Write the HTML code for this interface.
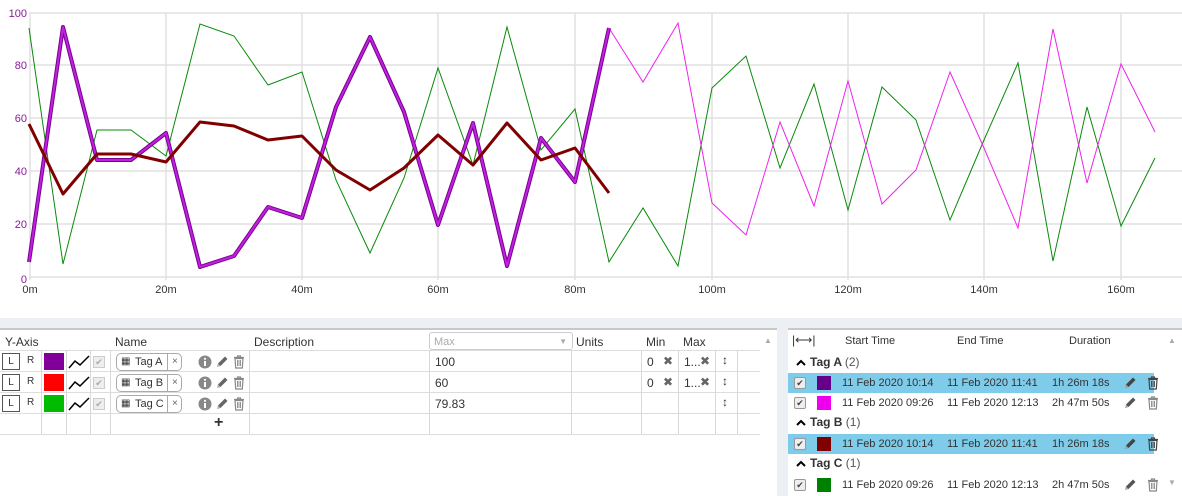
<!DOCTYPE html>
<html><head><meta charset="utf-8"><style>
body{margin:0;width:1182px;height:494px;overflow:hidden;background:#eceff3;font-family:"Liberation Sans",sans-serif;font-size:12px;color:#333;position:relative}
.chart{position:absolute;left:0;top:0;width:1182px;height:318px;background:#fff}
.lp{position:absolute;left:0;top:328px;width:777px;height:166px;background:#fff;border-top:2px solid #c8c8c8}
.rp{position:absolute;left:788px;top:328px;width:394px;height:166px;background:#fff;border-top:2px solid #c8c8c8;font-size:11px}
.a{position:absolute}
.vl{position:absolute;width:1px;background:#d8d8d8}
.hl{position:absolute;height:1px;background:#ddd}
.sw{position:absolute;width:20px;height:17px}
.tag{position:absolute;left:116px;width:64px;height:16px;border:1px solid #aaa;border-radius:5px;font-size:11px;line-height:16px}
.row{position:absolute;left:0;width:366px;height:20px}
.sel{background:#7ecbea}
.cb{position:absolute;left:6px;top:4px;width:10px;height:10px;border:1px solid #999;background:#eee;border-radius:2px;font-size:9px;line-height:10px;text-align:center;color:#444}
.ico{position:absolute}
</style></head><body>
<svg width="0" height="0" style="position:absolute">
<defs>
<symbol id="tr" viewBox="0 0 12 14"><path d="M1 2.5h10M4.5 2.5V1h3v1.5M2 3.5l.7 9.5h6.6l.7-9.5z" fill="none" stroke="currentColor" stroke-width="1.2"/><path d="M4.5 5v6M6 5v6M7.5 5v6" stroke="currentColor" stroke-width="0.9"/></symbol>
<symbol id="pn" viewBox="0 0 14 14"><path d="M2 12l1-3.5 7-7 2.5 2.5-7 7z" fill="currentColor"/><path d="M2 12l1-3.5 2.5 2.5z" fill="#fff" opacity=".5"/></symbol>
<symbol id="in" viewBox="0 0 14 14"><circle cx="7" cy="7" r="6.5" fill="currentColor"/><rect x="6" y="6" width="2" height="5" fill="#fff"/><circle cx="7" cy="3.8" r="1.1" fill="#fff"/></symbol>
</defs></svg>
<div class="chart">
<svg width="1182" height="318" style="position:absolute;left:0;top:0">
<g stroke="#e0e0e0" stroke-width="1.5">
<line x1="29" y1="13" x2="1182" y2="13"/><line x1="29" y1="65" x2="1182" y2="65"/><line x1="29" y1="118" x2="1182" y2="118"/><line x1="29" y1="171" x2="1182" y2="171"/><line x1="29" y1="224" x2="1182" y2="224"/><line x1="29" y1="277" x2="1182" y2="277"/>
<line x1="30" y1="13" x2="30" y2="280"/><line x1="166" y1="13" x2="166" y2="280"/><line x1="302" y1="13" x2="302" y2="280"/><line x1="438" y1="13" x2="438" y2="280"/><line x1="575" y1="13" x2="575" y2="280"/><line x1="712" y1="13" x2="712" y2="280"/><line x1="848" y1="13" x2="848" y2="280"/><line x1="984" y1="13" x2="984" y2="280"/><line x1="1121" y1="13" x2="1121" y2="280"/>
</g>
<g font-family="Liberation Sans,sans-serif" font-size="11" fill="#8a1a9a" text-anchor="end">
<text x="27" y="17">100</text><text x="27" y="69">80</text><text x="27" y="122">60</text><text x="27" y="175">40</text><text x="27" y="228">20</text><text x="27" y="283">0</text>
</g>
<g font-family="Liberation Sans,sans-serif" font-size="11" fill="#333" text-anchor="middle">
<text x="30" y="293">0m</text><text x="166" y="293">20m</text><text x="302" y="293">40m</text><text x="438" y="293">60m</text><text x="575" y="293">80m</text><text x="712" y="293">100m</text><text x="848" y="293">120m</text><text x="984" y="293">140m</text><text x="1121" y="293">160m</text>
</g>
<polyline fill="none" stroke="#0a8a0a" stroke-width="1" points="29,28 63,264 97,130 131,130 166,156 200,24 234,36 268,85 302,72 336,180 370,253 404,178 438,68 473,165 507,27 541,150 575,109 609,262 643,208 678,266 712,88 746,56 780,168 814,84 848,210 882,87 916,120 950,220 984,140 1018,63 1053,261 1087,107 1121,226 1155,158"/>
<polyline fill="none" stroke="#ee22ee" stroke-width="1" points="609,28 643,82 678,23 712,203 746,235 780,122 814,206 848,81 882,204 916,170 950,72 984,148 1018,228 1053,29 1087,183 1121,64 1155,132"/>
<polyline fill="none" stroke="#7a0090" stroke-width="4" stroke-linejoin="round" points="29,262 63,27 97,160 131,160 166,133 200,267 234,256 268,207 302,218 336,107 370,37 404,112 438,225 473,123 507,266 541,138 575,182 609,28"/>
<polyline fill="none" stroke="#c020e0" stroke-width="2" stroke-linejoin="round" points="29,262 63,27 97,160 131,160 166,133 200,267 234,256 268,207 302,218 336,107 370,37 404,112 438,225 473,123 507,266 541,138 575,182 609,28"/>
<polyline fill="none" stroke="#800000" stroke-width="3" stroke-linejoin="round" points="29,124 63,194 97,154 131,154 166,162 200,122 234,126 268,140 302,136 336,170 370,190 404,168 438,135 473,165 507,123 541,160 575,148 609,193"/>
</svg>
</div>

<div class="lp">
<div class="a" style="left:5px;top:5px">Y-Axis</div>
<div class="a" style="left:115px;top:5px">Name</div>
<div class="a" style="left:254px;top:5px">Description</div>
<div class="a" style="left:429px;top:2px;width:144px;height:18px;border:1px solid #ccc;border-radius:3px;color:#aaa;font-size:11px;line-height:18px;padding-left:4px;box-sizing:border-box">Max<span style="position:absolute;right:5px;font-size:8px">▼</span></div>
<div class="a" style="left:576px;top:5px">Units</div>
<div class="a" style="left:646px;top:5px">Min</div>
<div class="a" style="left:683px;top:5px">Max</div>
<div class="a" style="left:764px;top:6px;color:#aaa;font-size:8px">▲</div>
<div class="hl" style="left:0;top:20px;width:760px"></div>
<div class="hl" style="left:0;top:41px;width:760px"></div>
<div class="hl" style="left:0;top:62px;width:760px"></div>
<div class="hl" style="left:0;top:83px;width:760px"></div>
<div class="hl" style="left:0;top:104px;width:760px"></div>
<div class="vl" style="left:41px;top:20px;height:84px"></div>
<div class="vl" style="left:66px;top:20px;height:84px"></div>
<div class="vl" style="left:90px;top:20px;height:84px"></div>
<div class="vl" style="left:110px;top:20px;height:84px"></div>
<div class="vl" style="left:249px;top:20px;height:84px"></div>
<div class="vl" style="left:429px;top:20px;height:84px"></div>
<div class="vl" style="left:571px;top:20px;height:84px"></div>
<div class="vl" style="left:641px;top:20px;height:84px"></div>
<div class="vl" style="left:678px;top:20px;height:84px"></div>
<div class="vl" style="left:715px;top:20px;height:84px"></div>
<div class="vl" style="left:737px;top:20px;height:84px"></div>

<div class="a" style="top:22px;left:0;width:760px;height:20px">
<div class="a" style="left:2px;top:1px;width:16px;height:15px;border:1px solid #555;font-size:10px;text-align:center;line-height:15px">L</div><div class="a" style="left:27px;top:3px;font-size:10px">R</div>
<div class="sw" style="left:44px;top:1px;background:#800099"></div>
<svg class="a" style="left:68px;top:3px" width="22" height="14"><polyline points="1,13 7,6 12,10 21,1" fill="none" stroke="#000" stroke-width="1.5"/></svg>
<div class="a" style="left:93px;top:4px;width:10px;height:10px;border:1px solid #ccc;background:#eee;color:#aaa;font-size:9px;line-height:10px;text-align:center">✔</div>
<div class="tag" style="top:1px"><span style="position:absolute;left:4px;top:0;font-size:10px">▦</span><span style="position:absolute;left:18px;top:0">Tag A</span><span style="position:absolute;left:50px;top:0;height:16px;border-left:1px solid #aaa;padding-left:4px;color:#666;font-size:10px">×</span></div>
<svg class="ico" style="left:198px;top:3px;color:#888" width="14" height="14"><use href="#in"/></svg>
<svg class="ico" style="left:215px;top:3px;color:#666" width="14" height="14"><use href="#pn"/></svg>
<svg class="ico" style="left:233px;top:3px;color:#888" width="12" height="14"><use href="#tr"/></svg>
<div class="a" style="left:435px;top:3px">100</div>
<div class="a" style="left:647px;top:3px">0</div><div class="a" style="left:663px;top:2px;color:#666">✖</div>
<div class="a" style="left:684px;top:3px">1...</div><div class="a" style="left:700px;top:2px;color:#666">✖</div>
<div class="a" style="left:722px;top:1px">↕</div>
</div>
<div class="a" style="top:43px;left:0;width:760px;height:20px">
<div class="a" style="left:2px;top:1px;width:16px;height:15px;border:1px solid #555;font-size:10px;text-align:center;line-height:15px">L</div><div class="a" style="left:27px;top:3px;font-size:10px">R</div>
<div class="sw" style="left:44px;top:1px;background:#ff0000"></div>
<svg class="a" style="left:68px;top:3px" width="22" height="14"><polyline points="1,13 7,6 12,10 21,1" fill="none" stroke="#000" stroke-width="1.5"/></svg>
<div class="a" style="left:93px;top:4px;width:10px;height:10px;border:1px solid #ccc;background:#eee;color:#aaa;font-size:9px;line-height:10px;text-align:center">✔</div>
<div class="tag" style="top:1px"><span style="position:absolute;left:4px;top:0;font-size:10px">▦</span><span style="position:absolute;left:18px;top:0">Tag B</span><span style="position:absolute;left:50px;top:0;height:16px;border-left:1px solid #aaa;padding-left:4px;color:#666;font-size:10px">×</span></div>
<svg class="ico" style="left:198px;top:3px;color:#888" width="14" height="14"><use href="#in"/></svg>
<svg class="ico" style="left:215px;top:3px;color:#666" width="14" height="14"><use href="#pn"/></svg>
<svg class="ico" style="left:233px;top:3px;color:#888" width="12" height="14"><use href="#tr"/></svg>
<div class="a" style="left:435px;top:3px">60</div>
<div class="a" style="left:647px;top:3px">0</div><div class="a" style="left:663px;top:2px;color:#666">✖</div>
<div class="a" style="left:684px;top:3px">1...</div><div class="a" style="left:700px;top:2px;color:#666">✖</div>
<div class="a" style="left:722px;top:1px">↕</div>
</div>
<div class="a" style="top:64px;left:0;width:760px;height:20px">
<div class="a" style="left:2px;top:1px;width:16px;height:15px;border:1px solid #555;font-size:10px;text-align:center;line-height:15px">L</div><div class="a" style="left:27px;top:3px;font-size:10px">R</div>
<div class="sw" style="left:44px;top:1px;background:#00bb00"></div>
<svg class="a" style="left:68px;top:3px" width="22" height="14"><polyline points="1,13 7,6 12,10 21,1" fill="none" stroke="#000" stroke-width="1.5"/></svg>
<div class="a" style="left:93px;top:4px;width:10px;height:10px;border:1px solid #ccc;background:#eee;color:#aaa;font-size:9px;line-height:10px;text-align:center">✔</div>
<div class="tag" style="top:1px"><span style="position:absolute;left:4px;top:0;font-size:10px">▦</span><span style="position:absolute;left:18px;top:0">Tag C</span><span style="position:absolute;left:50px;top:0;height:16px;border-left:1px solid #aaa;padding-left:4px;color:#666;font-size:10px">×</span></div>
<svg class="ico" style="left:198px;top:3px;color:#888" width="14" height="14"><use href="#in"/></svg>
<svg class="ico" style="left:215px;top:3px;color:#666" width="14" height="14"><use href="#pn"/></svg>
<svg class="ico" style="left:233px;top:3px;color:#888" width="12" height="14"><use href="#tr"/></svg>
<div class="a" style="left:435px;top:3px">79.83</div>
<div class="a" style="left:722px;top:1px">↕</div>
</div>
<div class="a" style="left:214px;top:84px;font-size:16px;font-weight:bold;color:#333">+</div>
</div>

<div class="rp">
<div class="a" style="left:4px;top:3px;font-size:12px">|⟷|</div>
<div class="a" style="left:57px;top:5px">Start Time</div>
<div class="a" style="left:169px;top:5px">End Time</div>
<div class="a" style="left:281px;top:5px">Duration</div>
<div class="a" style="left:380px;top:6px;color:#aaa;font-size:8px">▲</div>
<div class="a" style="left:380px;top:148px;color:#aaa;font-size:8px">▼</div>
<div class="a" style="left:8px;top:25px;font-weight:bold;font-size:12px"><svg width="10" height="8" style="margin-right:4px"><path d="M1 7l4-4 4 4" fill="none" stroke="#000" stroke-width="2"/></svg>Tag A <span style="font-weight:normal;color:#555">(2)</span></div>
<div class="row sel" style="top:43px"><div class="cb">✔</div><div class="sw" style="left:29px;top:3px;width:14px;height:14px;background:#660088"></div><div class="a" style="left:54px;top:4px">11 Feb 2020 10:14</div><div class="a" style="left:159px;top:4px">11 Feb 2020 11:41</div><div class="a" style="left:264px;top:4px">1h 26m 18s</div><svg class="ico" style="left:335px;top:3px;color:#444" width="14" height="14"><use href="#pn"/></svg><svg class="ico" style="left:359px;top:3px;color:#444" width="12" height="14"><use href="#tr"/></svg></div>
<div class="row" style="top:63px"><div class="cb">✔</div><div class="sw" style="left:29px;top:3px;width:14px;height:14px;background:#ee00ee"></div><div class="a" style="left:54px;top:4px">11 Feb 2020 09:26</div><div class="a" style="left:159px;top:4px">11 Feb 2020 12:13</div><div class="a" style="left:264px;top:4px">2h 47m 50s</div><svg class="ico" style="left:335px;top:3px;color:#555" width="14" height="14"><use href="#pn"/></svg><svg class="ico" style="left:359px;top:3px;color:#888" width="12" height="14"><use href="#tr"/></svg></div>
<div class="a" style="left:8px;top:85px;font-weight:bold;font-size:12px"><svg width="10" height="8" style="margin-right:4px"><path d="M1 7l4-4 4 4" fill="none" stroke="#000" stroke-width="2"/></svg>Tag B <span style="font-weight:normal;color:#555">(1)</span></div>
<div class="row sel" style="top:104px"><div class="cb">✔</div><div class="sw" style="left:29px;top:3px;width:14px;height:14px;background:#800000"></div><div class="a" style="left:54px;top:4px">11 Feb 2020 10:14</div><div class="a" style="left:159px;top:4px">11 Feb 2020 11:41</div><div class="a" style="left:264px;top:4px">1h 26m 18s</div><svg class="ico" style="left:335px;top:3px;color:#444" width="14" height="14"><use href="#pn"/></svg><svg class="ico" style="left:359px;top:3px;color:#444" width="12" height="14"><use href="#tr"/></svg></div>
<div class="a" style="left:8px;top:126px;font-weight:bold;font-size:12px"><svg width="10" height="8" style="margin-right:4px"><path d="M1 7l4-4 4 4" fill="none" stroke="#000" stroke-width="2"/></svg>Tag C <span style="font-weight:normal;color:#555">(1)</span></div>
<div class="row" style="top:145px"><div class="cb">✔</div><div class="sw" style="left:29px;top:3px;width:14px;height:14px;background:#008000"></div><div class="a" style="left:54px;top:4px">11 Feb 2020 09:26</div><div class="a" style="left:159px;top:4px">11 Feb 2020 12:13</div><div class="a" style="left:264px;top:4px">2h 47m 50s</div><svg class="ico" style="left:335px;top:3px;color:#555" width="14" height="14"><use href="#pn"/></svg><svg class="ico" style="left:359px;top:3px;color:#888" width="12" height="14"><use href="#tr"/></svg></div>
</div>
</body></html>
